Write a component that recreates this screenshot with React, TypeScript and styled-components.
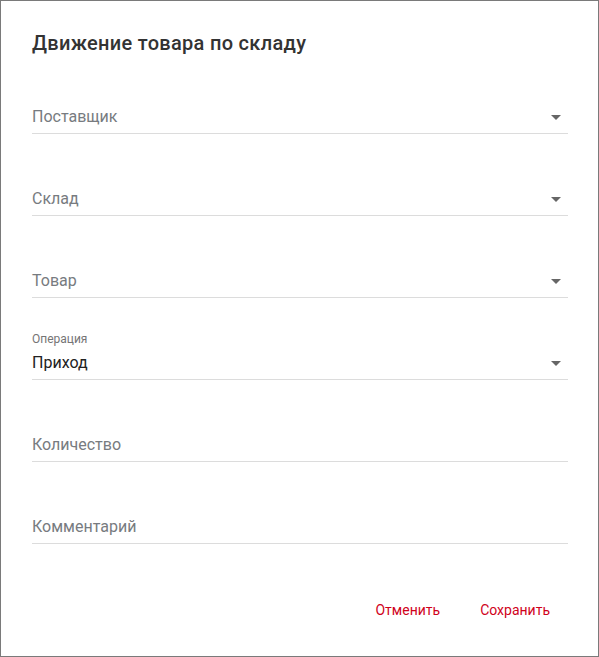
import React from "react";
import styled, { createGlobalStyle } from "styled-components";

const GlobalStyle = createGlobalStyle`
  html, body { margin: 0; padding: 0; background: #fff; }
  body { font-family: Roboto, "Noto Sans", Arial, sans-serif; }
  * { box-sizing: border-box; }
`;

const Dialog = styled.div`
  width: 599px;
  height: 657px;
  border: 1px solid #7a7a7a;
  background: #fff;
  padding: 26px 30px 0 31px;
  display: flex;
  flex-direction: column;
`;

const Title = styled.h2`
  margin: 0;
  font-size: 20px;
  line-height: 32px;
  font-weight: 500;
  color: #333;
  letter-spacing: 0.3px;
`;

const Fields = styled.div`
  margin-top: 26px;
  display: flex;
  flex-direction: column;
  gap: 33px;
`;

const Field = styled.div`
  position: relative;
  padding-top: 16px;
  border-bottom: 1px solid #dcdcdc;
`;

const SmallLabel = styled.div`
  position: absolute;
  top: 1px;
  left: 0;
  font-size: 12px;
  line-height: 14px;
  color: #757575;
`;

const InputRow = styled.div`
  height: 32px;
  padding: 6px 0 7px;
  display: flex;
  align-items: center;
  justify-content: space-between;
`;

const Value = styled.span<{ $placeholder?: boolean }>`
  font-size: 16px;
  line-height: 19px;
  color: ${(p) => (p.$placeholder ? "#777b80" : "#222")};
`;

const Arrow = styled.svg`
  width: 24px;
  height: 24px;
  fill: #666;
  flex: none;
`;

const Actions = styled.div`
  margin-top: 48px;
  margin-right: 2px;
  display: flex;
  justify-content: flex-end;
  gap: 8px;
`;

const Button = styled.button`
  height: 36px;
  min-width: 64px;
  padding: 0 16px;
  border: none;
  background: transparent;
  font-family: Roboto, "Noto Sans", Arial, sans-serif;
  font-size: 14px;
  font-weight: 400;
  color: #d0021b;
  cursor: pointer;
`;

type FieldDef = { label: string; value?: string; select?: boolean };

const fields: FieldDef[] = [
  { label: "Поставщик", select: true },
  { label: "Склад", select: true },
  { label: "Товар", select: true },
  { label: "Операция", value: "Приход", select: true },
  { label: "Количество" },
  { label: "Комментарий" },
];

export default function App() {
  return (
    <>
      <GlobalStyle />
      <Dialog>
        <Title>Движение товара по складу</Title>
        <Fields>
          {fields.map((f) => (
            <Field key={f.label}>
              {f.value && <SmallLabel>{f.label}</SmallLabel>}
              <InputRow>
                <Value $placeholder={!f.value}>{f.value ?? f.label}</Value>
                {f.select && (
                  <Arrow viewBox="0 0 24 24">
                    <path d="M7 10l5 5 5-5z" />
                  </Arrow>
                )}
              </InputRow>
            </Field>
          ))}
        </Fields>
        <Actions>
          <Button>Отменить</Button>
          <Button>Сохранить</Button>
        </Actions>
      </Dialog>
    </>
  );
}
